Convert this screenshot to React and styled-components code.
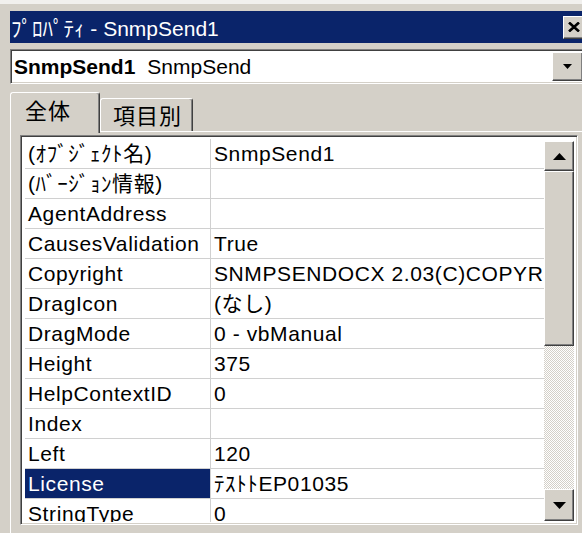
import React from 'react';
import styled, { createGlobalStyle, css } from 'styled-components';

const FACE = '#d4d0c8';
const NAVY = '#0a246a';

const GlobalStyle = createGlobalStyle`
	html, body {
		margin: 0;
		padding: 0;
		background: ${FACE};
		overflow: hidden;
	}
	body {
		font-family: "Liberation Sans", "Noto Sans CJK JP", sans-serif;
		font-size: 21px;
		color: #000;
	}
`;

const raised = css`
	box-sizing: border-box;
	border: 1px solid;
	border-color: #fff #404040 #404040 #fff;
	box-shadow: inset -1px -1px 0 #808080, inset 1px 1px 0 ${FACE};
	background: ${FACE};
`;

const sunken = css`
	box-sizing: border-box;
	border: 1px solid;
	border-color: #808080 #fff #fff #808080;
	box-shadow: inset 1px 1px 0 #404040, inset -1px -1px 0 ${FACE};
`;

const Window = styled.div`
	box-sizing: border-box;
	width: 586px;
	height: 533px;
	border-top: 4px solid #f1f0ee;
	padding: 7px 0 0 10px;
	display: flex;
	flex-direction: column;
`;

const TitleBar = styled.div`
	height: 32px;
	background: ${NAVY};
	display: flex;
	align-items: center;
	justify-content: space-between;
	padding: 0 2px 0 1px;
	color: #fff;
	white-space: nowrap;
`;

const CloseButton = styled.div`
	${raised};
	width: 21px;
	height: 23px;
	display: flex;
	align-items: center;
	justify-content: center;
`;

const Combo = styled.div`
	${sunken};
	margin-top: 6px;
	height: 35px;
	padding: 2px;
	display: flex;
	background: #fff;
`;

const ComboText = styled.div`
	flex: 1;
	display: flex;
	align-items: center;
	padding-left: 1px;
	white-space: nowrap;
`;

const ObjectName = styled.span`
	font-weight: bold;
	margin-right: 12px;
`;

const DropButton = styled.div`
	${raised};
	width: 31px;
	display: flex;
	align-items: center;
	justify-content: center;
`;

const TabStrip = styled.div`
	margin-top: 8px;
	height: 39px;
	display: flex;
	align-items: flex-end;
	position: relative;
	z-index: 1;
`;

const Tab = styled.div`
	box-sizing: border-box;
	height: ${({ active }) => (active ? 41 : 33)}px;
	width: ${({ active }) => (active ? 90 : 93)}px;
	margin-bottom: ${({ active }) => (active ? -2 : 0)}px;
	border: 1px solid;
	border-bottom: none;
	border-color: #fff #404040 transparent #fff;
	border-radius: 3px 3px 0 0;
	box-shadow: inset -1px 0 0 #808080;
	background: ${FACE};
	display: flex;
	align-items: center;
	justify-content: ${({ active }) => (active ? 'flex-start' : 'center')};
	padding: ${({ active }) => (active ? '0 0 8px 14px' : '0 0 2px 2px')};
	font-family: "Noto Sans CJK JP", sans-serif;
	font-size: 22px;
	letter-spacing: 1px;
`;

const Panel = styled.div`
	flex: 1;
	border-top: 1px solid #fff;
	border-left: 1px solid #fff;
	padding: 3px 8px 0 9px;
`;

const Grid = styled.div`
	${sunken};
	height: 390px;
	padding: 2px;
	background: #fff;
	display: flex;
`;

const Rows = styled.div`
	flex: 1;
	overflow: hidden;
	padding: 1px 0 0 2px;
`;

const Row = styled.div`
	display: grid;
	grid-template-columns: 186px 1fr;
	height: 30px;
	border-bottom: 1px solid #d0d0d0;
	box-sizing: border-box;
	line-height: 29px;
	letter-spacing: 0.6px;
	white-space: nowrap;
`;

const Cell = styled.div`
	overflow: hidden;
	padding-left: 3px;
	${({ name }) => name && 'border-right: 1px solid #d0d0d0;'}
	${({ selected }) => selected && `background: ${NAVY}; color: #fff;`}
`;

const Scrollbar = styled.div`
	width: 31px;
	padding: 3px 1px 1px 0;
	box-sizing: border-box;
	display: flex;
	flex-direction: column;
`;

const ArrowButton = styled.div`
	${raised};
	height: ${({ h }) => h}px;
	display: flex;
	align-items: center;
	justify-content: center;
`;

const Thumb = styled.div`
	${raised};
	height: 175px;
`;

const Track = styled.div`
	flex: 1;
	background-image: conic-gradient(#fff 25%, ${FACE} 0 50%, #fff 0 75%, ${FACE} 0);
	background-size: 2px 2px;
`;

const Arrow = ({ down, w = 13, h = 7 }) => (
	<svg width={w} height={h} viewBox={`0 0 ${w} ${h}`}>
		<polygon
			points={down ? `0,0 ${w},0 ${w / 2},${h}` : `0,${h} ${w},${h} ${w / 2},0`}
			fill="#000"
		/>
	</svg>
);

const CloseIcon = () => (
	<svg width="12" height="10" viewBox="0 0 12 10">
		<path d="M1 0.5 L11 9.5 M11 0.5 L1 9.5" stroke="#000" strokeWidth="2.6" />
	</svg>
);

const properties = [
	['(ｵﾌﾞｼﾞｪｸﾄ名)', 'SnmpSend1'],
	['(ﾊﾞｰｼﾞｮﾝ情報)', ''],
	['AgentAddress', ''],
	['CausesValidation', 'True'],
	['Copyright', 'SNMPSENDOCX 2.03(C)COPYRIGHT'],
	['DragIcon', '(なし)'],
	['DragMode', '0 - vbManual'],
	['Height', '375'],
	['HelpContextID', '0'],
	['Index', ''],
	['Left', '120'],
	['License', 'ﾃｽﾄﾄEP01035'],
	['StringType', '0'],
];

const App = () => (
	<Window>
		<GlobalStyle />
		<TitleBar>
			<span>ﾌﾟﾛﾊﾟﾃｨ - SnmpSend1</span>
			<CloseButton>
				<CloseIcon />
			</CloseButton>
		</TitleBar>
		<Combo>
			<ComboText>
				<ObjectName>SnmpSend1</ObjectName>
				SnmpSend
			</ComboText>
			<DropButton>
				<Arrow down w={9} h={5} />
			</DropButton>
		</Combo>
		<TabStrip>
			<Tab active>全体</Tab>
			<Tab>項目別</Tab>
		</TabStrip>
		<Panel>
			<Grid>
				<Rows>
					{properties.map(([name, value]) => (
						<Row key={name}>
							<Cell name="true" selected={name === 'License'}>
								{name}
							</Cell>
							<Cell>{value}</Cell>
						</Row>
					))}
				</Rows>
				<Scrollbar>
					<ArrowButton h={30}>
						<Arrow />
					</ArrowButton>
					<Thumb />
					<Track />
					<ArrowButton h={32}>
						<Arrow down />
					</ArrowButton>
				</Scrollbar>
			</Grid>
		</Panel>
	</Window>
);

export default App;
